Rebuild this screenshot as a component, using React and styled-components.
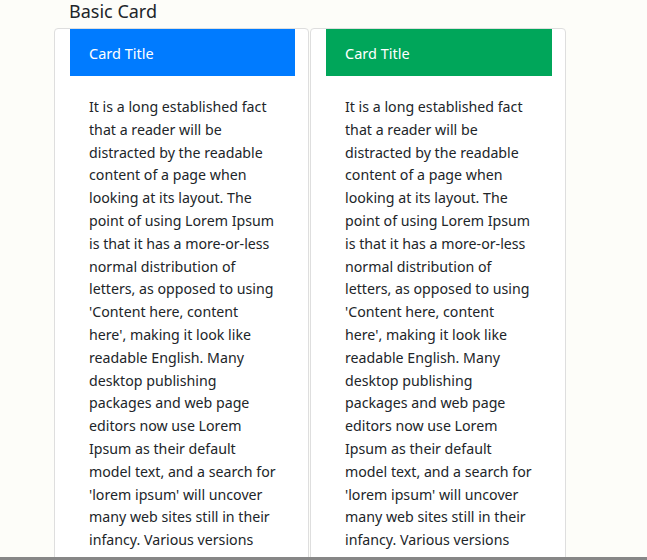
import React from 'react';
import styled, { createGlobalStyle } from 'styled-components';

const GlobalStyle = createGlobalStyle`
  html, body {
    margin: 0;
    padding: 0;
    overflow: hidden;
    background: #fdfdf9;
    font-family: "Noto Sans", "Open Sans", sans-serif;
    color: #212529;
  }
`;

const Page = styled.div`
  padding: 0 0 0 54px;
`;

const Heading = styled.h3`
  margin: 0 0 6px 15px;
  font-size: 18px;
  font-weight: 400;
  line-height: 22px;
`;

const CardRow = styled.div`
  display: grid;
  grid-template-columns: 255px 256px;
  column-gap: 1px;
  align-items: start;
`;

const Card = styled.div`
  background: #fff;
  border: 1px solid #dedede;
  border-radius: 4px;
  padding: 0 13px 0 15px;
`;

const CardHeader = styled.div`
  height: 47px;
  display: flex;
  align-items: center;
  padding-left: 19px;
  background: ${({ color }) => color};
  color: #fff;
  font-size: 14.5px;
`;

const CardBody = styled.p`
  margin: 0;
  padding: 20px 18px 40px 19px;
  font-size: 14.2px;
  line-height: 22.8px;
`;

const ScrollEdge = styled.div`
  position: fixed;
  left: 0;
  right: 0;
  bottom: 0;
  height: 3px;
  background: #878787;
`;

// only the part of the paragraph that is visible in the viewport
const lorem = `It is a long established fact that a reader will be distracted by the readable content of a page when looking at its layout. The point of using Lorem Ipsum is that it has a more-or-less normal distribution of letters, as opposed to using 'Content here, content here', making it look like readable English. Many desktop publishing packages and web page editors now use Lorem Ipsum as their default model text, and a search for 'lorem ipsum' will uncover many web sites still in their infancy. Various versions`;

const cards = [
    { key: 'primary', color: '#007bff' },
    { key: 'success', color: '#00a65a' },
];

export default function App() {
    return (
        <Page>
            <GlobalStyle />
            <Heading>Basic Card</Heading>
            <CardRow>
                {cards.map(card => (
                    <Card key={card.key}>
                        <CardHeader color={card.color}>Card Title</CardHeader>
                        <CardBody>{lorem}</CardBody>
                    </Card>
                ))}
            </CardRow>
            <ScrollEdge />
        </Page>
    );
}
